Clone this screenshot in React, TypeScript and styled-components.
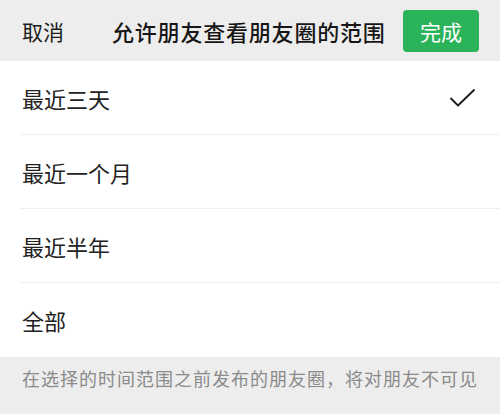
import React, {useState} from 'react'
import styled, {createGlobalStyle} from 'styled-components'

const GlobalStyle = createGlobalStyle`
  html, body {
    margin: 0;
    padding: 0;
    background: #ededed;
  }
  body {
    font-family: "Noto Sans CJK SC", "Noto Sans", sans-serif;
  }
`

const Page = styled.div`
  width: 500px;
  height: 414px;
  display: flex;
  flex-direction: column;
  background: #ededed;
  overflow: hidden;
`

const Header = styled.div`
  height: 61px;
  display: flex;
  align-items: center;
  padding: 0 22px;
  box-sizing: border-box;
`

const Cancel = styled.div`
  font-size: 21px;
  color: #1c1c1c;
  width: 90px;
`

const Title = styled.div`
  flex: 1;
  font-size: 22px;
  font-weight: 500;
  letter-spacing: 0.8px;
  color: #161616;
  white-space: nowrap;
`

const DoneButton = styled.button`
  width: 76px;
  height: 42px;
  border: none;
  border-radius: 4px;
  background: #2bb35a;
  color: #fff;
  font-family: inherit;
  font-size: 21px;
  padding: 0;
  margin-right: -1px;
`

const List = styled.div`
  background: #fff;
  display: flex;
  flex-direction: column;
`

const Row = styled.div<{$last?: boolean}>`
  height: 74px;
  margin-left: 20px;
  padding-right: 24px;
  display: flex;
  align-items: center;
  justify-content: space-between;
  border-bottom: ${p => (p.$last ? 'none' : '1px solid #efefef')};
  box-sizing: border-box;
  cursor: pointer;
`

const RowLabel = styled.span`
  font-size: 22px;
  color: #222;
  padding-left: 2px;
`

const Footer = styled.div`
  padding: 8px 22px;
  font-size: 18px;
  letter-spacing: 1px;
  color: #8a8a8a;
  white-space: nowrap;
`

const Check = () => (
  <svg width="27" height="22" viewBox="0 0 27 22" fill="none">
    <path d="M2 11.5 L9 18.5 L25 3" stroke="#1a1a1a" strokeWidth="1.8" strokeLinecap="round" strokeLinejoin="round" />
  </svg>
)

const options = ['最近三天', '最近一个月', '最近半年', '全部']

export default function App() {
  const [selected, setSelected] = useState(0)

  return (
    <Page>
      <GlobalStyle />
      <Header>
        <Cancel>取消</Cancel>
        <Title>允许朋友查看朋友圈的范围</Title>
        <DoneButton>完成</DoneButton>
      </Header>
      <List>
        {options.map((o, i) => (
          <Row key={o} $last={i === options.length - 1} onClick={() => setSelected(i)}>
            <RowLabel>{o}</RowLabel>
            {selected === i && <Check />}
          </Row>
        ))}
      </List>
      <Footer>在选择的时间范围之前发布的朋友圈，将对朋友不可见</Footer>
    </Page>
  )
}
